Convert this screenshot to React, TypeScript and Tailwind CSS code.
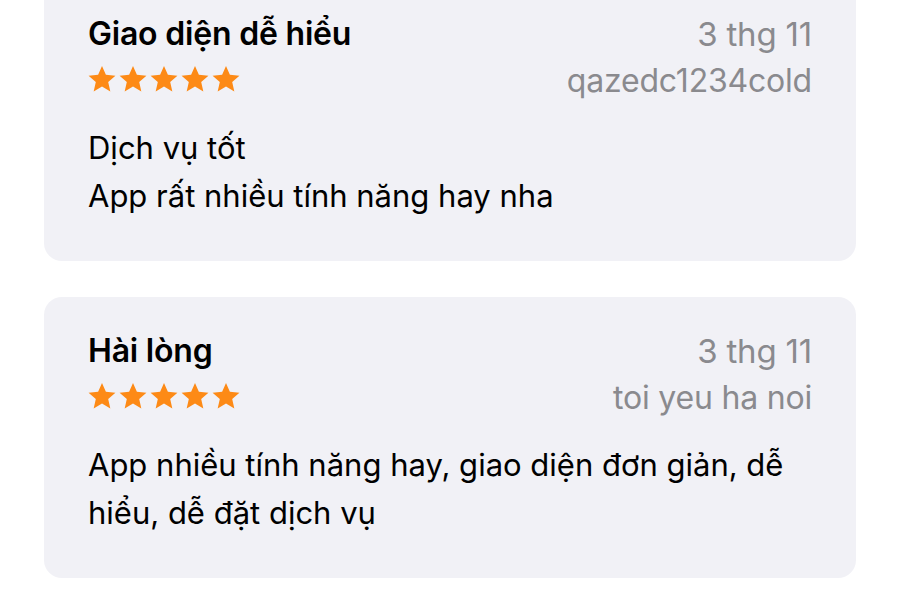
import React from "react";

interface Review {
  title: string;
  date: string;
  author: string;
  body: string[];
}

const reviews: Review[] = [
  {
    title: "Giao diện dễ hiểu",
    date: "3 thg 11",
    author: "qazedc1234cold",
    body: ["Dịch vụ tốt", "App rất nhiều tính năng hay nha"],
  },
  {
    title: "Hài lòng",
    date: "3 thg 11",
    author: "toi yeu ha noi",
    body: ["App nhiều tính năng hay, giao diện đơn giản, dễ hiểu, dễ đặt dịch vụ"],
  },
];

function Star() {
  return (
    <svg viewBox="0 0 24 24" className="h-[30px] w-[30px] shrink-0">
      <path
        d="M12 1.6l3.1 7.05 7.65.7-5.8 5.1 1.72 7.5L12 18.05 5.33 21.95l1.72-7.5-5.8-5.1 7.65-.7z"
        fill="#fd8a16"
      />
    </svg>
  );
}

function ReviewCard({ review }: { review: Review }) {
  return (
    <div className="h-[281px] rounded-[18px] bg-[#f1f1f6] px-[44px] pt-[38px]">
      <div className="flex h-[32px] items-center justify-between">
        <h3 className="text-[32px] font-semibold leading-[32px] tracking-[-0.2px] text-black">
          {review.title}
        </h3>
        <span className="text-[33px] leading-[32px] tracking-[-0.2px] text-[#8a8a8e]">{review.date}</span>
      </div>
      <div className="mt-[13px] flex h-[32px] items-center justify-between">
        <div className="-ml-[1px] flex gap-[1px]">
          {[0, 1, 2, 3, 4].map((i) => (
            <Star key={i} />
          ))}
        </div>
        <span className="pt-[4px] text-[32px] leading-[32px] tracking-[-0.2px] text-[#8a8a8e]">
          {review.author}
        </span>
      </div>
      <div className="mt-[29px] text-[31px] leading-[48px] text-black">
        {review.body.map((line, i) => (
          <p key={i}>{line}</p>
        ))}
      </div>
    </div>
  );
}

export default function App() {
  return (
    <div
      className="h-[600px] w-[900px] overflow-hidden bg-white"
      style={{ fontFamily: "Inter, 'Noto Sans', sans-serif" }}
    >
      <div className="-mt-[20px] flex flex-col gap-[36px] px-[44px]">
        {reviews.map((r, i) => (
          <ReviewCard key={i} review={r} />
        ))}
      </div>
    </div>
  );
}
